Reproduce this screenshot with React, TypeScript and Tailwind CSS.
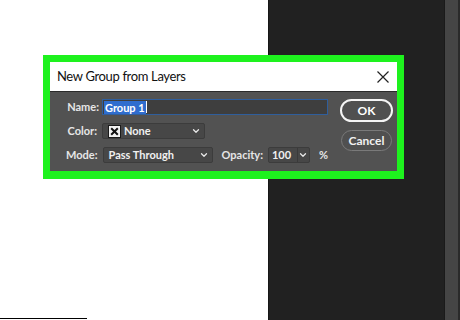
import { ChevronDown } from "lucide-react";

function XBox() {
  return (
    <svg width="13" height="13" viewBox="0 0 13 13" className="shrink-0">
      <rect x="0.5" y="0.5" width="12" height="12" fill="#f2f2f2" stroke="#1a1a1a" />
      <path d="M3.2 3.2 L9.8 9.8 M9.8 3.2 L3.2 9.8" stroke="#111" strokeWidth="2" />
    </svg>
  );
}

function CloseIcon() {
  return (
    <svg width="12" height="12" viewBox="0 0 12 12">
      <path d="M0.5 0.5 L11.5 11.5 M11.5 0.5 L0.5 11.5" stroke="#222" strokeWidth="1.2" />
    </svg>
  );
}

function Select({ width, children }: { width: string; children: React.ReactNode }) {
  return (
    <div
      className={`${width} h-4 flex items-center justify-between pl-[5px] pr-[3px] bg-[#474747] border border-[#3c3c3c] rounded-[2px] text-[#f0f0f0]`}
    >
      <div className="flex items-center gap-[3px]">{children}</div>
      <ChevronDown size={10} strokeWidth={3} color="#e8e8e8" />
    </div>
  );
}

export default function App() {
  return (
    <div
      className="relative w-[460px] h-[320px] flex overflow-hidden bg-white"
      style={{ fontFamily: "Lato, 'Liberation Sans', sans-serif" }}
    >
      <div className="w-[268px] h-full bg-white relative">
        <div className="absolute left-0 bottom-[1px] w-[87px] h-[1px] bg-black" />
      </div>
      <div className="flex-1 h-full flex bg-[#212121] border-l border-[#161616]">
        <div className="flex-1" />
        <div className="w-[1px] bg-[#1a1a1a]" />
        <div className="w-[13px] bg-[#454545]" />
        <div className="w-[2px] bg-[#2a2a2a]" />
      </div>

      {/* dialog */}
      <div className="absolute left-[43px] top-[55px] w-[361px] border-[7px] border-b-[8px] border-[#1ef21e] bg-[#1ef21e]">
        <div className="flex flex-col">
          <div className="h-[30px] bg-white flex items-center justify-between pl-[7px] pr-[8px] border-b border-[#2a2a2a]">
            <span className="text-[13px] text-[#111] tracking-[-0.35px]">New Group from Layers</span>
            <CloseIcon />
          </div>
          <div className="h-[79px] bg-[#525252] flex pt-[7px] text-[11px] font-bold">
            <div className="w-[278px] flex flex-col gap-2">
              <div className="flex items-center gap-[3px] h-4">
                <span className="w-[49px] text-right text-[#e6e6e6]">Name:</span>
                <div className="w-[226px] h-4 bg-[#3e3e3e] border border-[#2f5e9c] flex items-center pl-[1px]">
                  <span className="bg-[#2f6dcf] text-white px-[1px] leading-[13px]">Group 1</span>
                  <span className="w-[1px] h-[12px] bg-white" />
                </div>
              </div>
              <div className="flex items-center gap-[5px] h-4">
                <span className="w-[47px] text-right text-[#e6e6e6]">Color:</span>
                <Select width="w-[103px]">
                  <XBox />
                  <span>None</span>
                </Select>
              </div>
              <div className="flex items-center gap-[5px] h-4">
                <span className="w-[49px] text-right text-[#e6e6e6]">Mode:</span>
                <Select width="w-[113px]">
                  <span>Pass Through</span>
                </Select>
                <span className="ml-[4px] text-[#e6e6e6]">Opacity:</span>
                <div className="h-4 flex bg-[#474747] border border-[#3c3c3c] rounded-[2px] text-[#f0f0f0]">
                  <span className="w-[28px] pl-[3px] flex items-center">100</span>
                  <span className="w-[12px] border-l border-[#3a3a3a] flex items-center justify-center">
                    <ChevronDown size={10} strokeWidth={3} color="#e8e8e8" />
                  </span>
                </div>
                <span className="ml-[4px] text-[#e6e6e6]">%</span>
              </div>
            </div>
            <div className="flex flex-col items-center gap-[8px] ml-[12px]">
              <button className="w-[53px] h-[23px] rounded-full border-2 border-[#f5f5f5] bg-[#505050] text-white text-[12px] font-bold flex items-center justify-center">
                OK
              </button>
              <button className="w-[51px] h-[21px] rounded-full border border-[#7a7a7a] bg-[#505050] text-[#f0f0f0] text-[12px] font-bold flex items-center justify-center">
                Cancel
              </button>
            </div>
          </div>
        </div>
      </div>
    </div>
  );
}
